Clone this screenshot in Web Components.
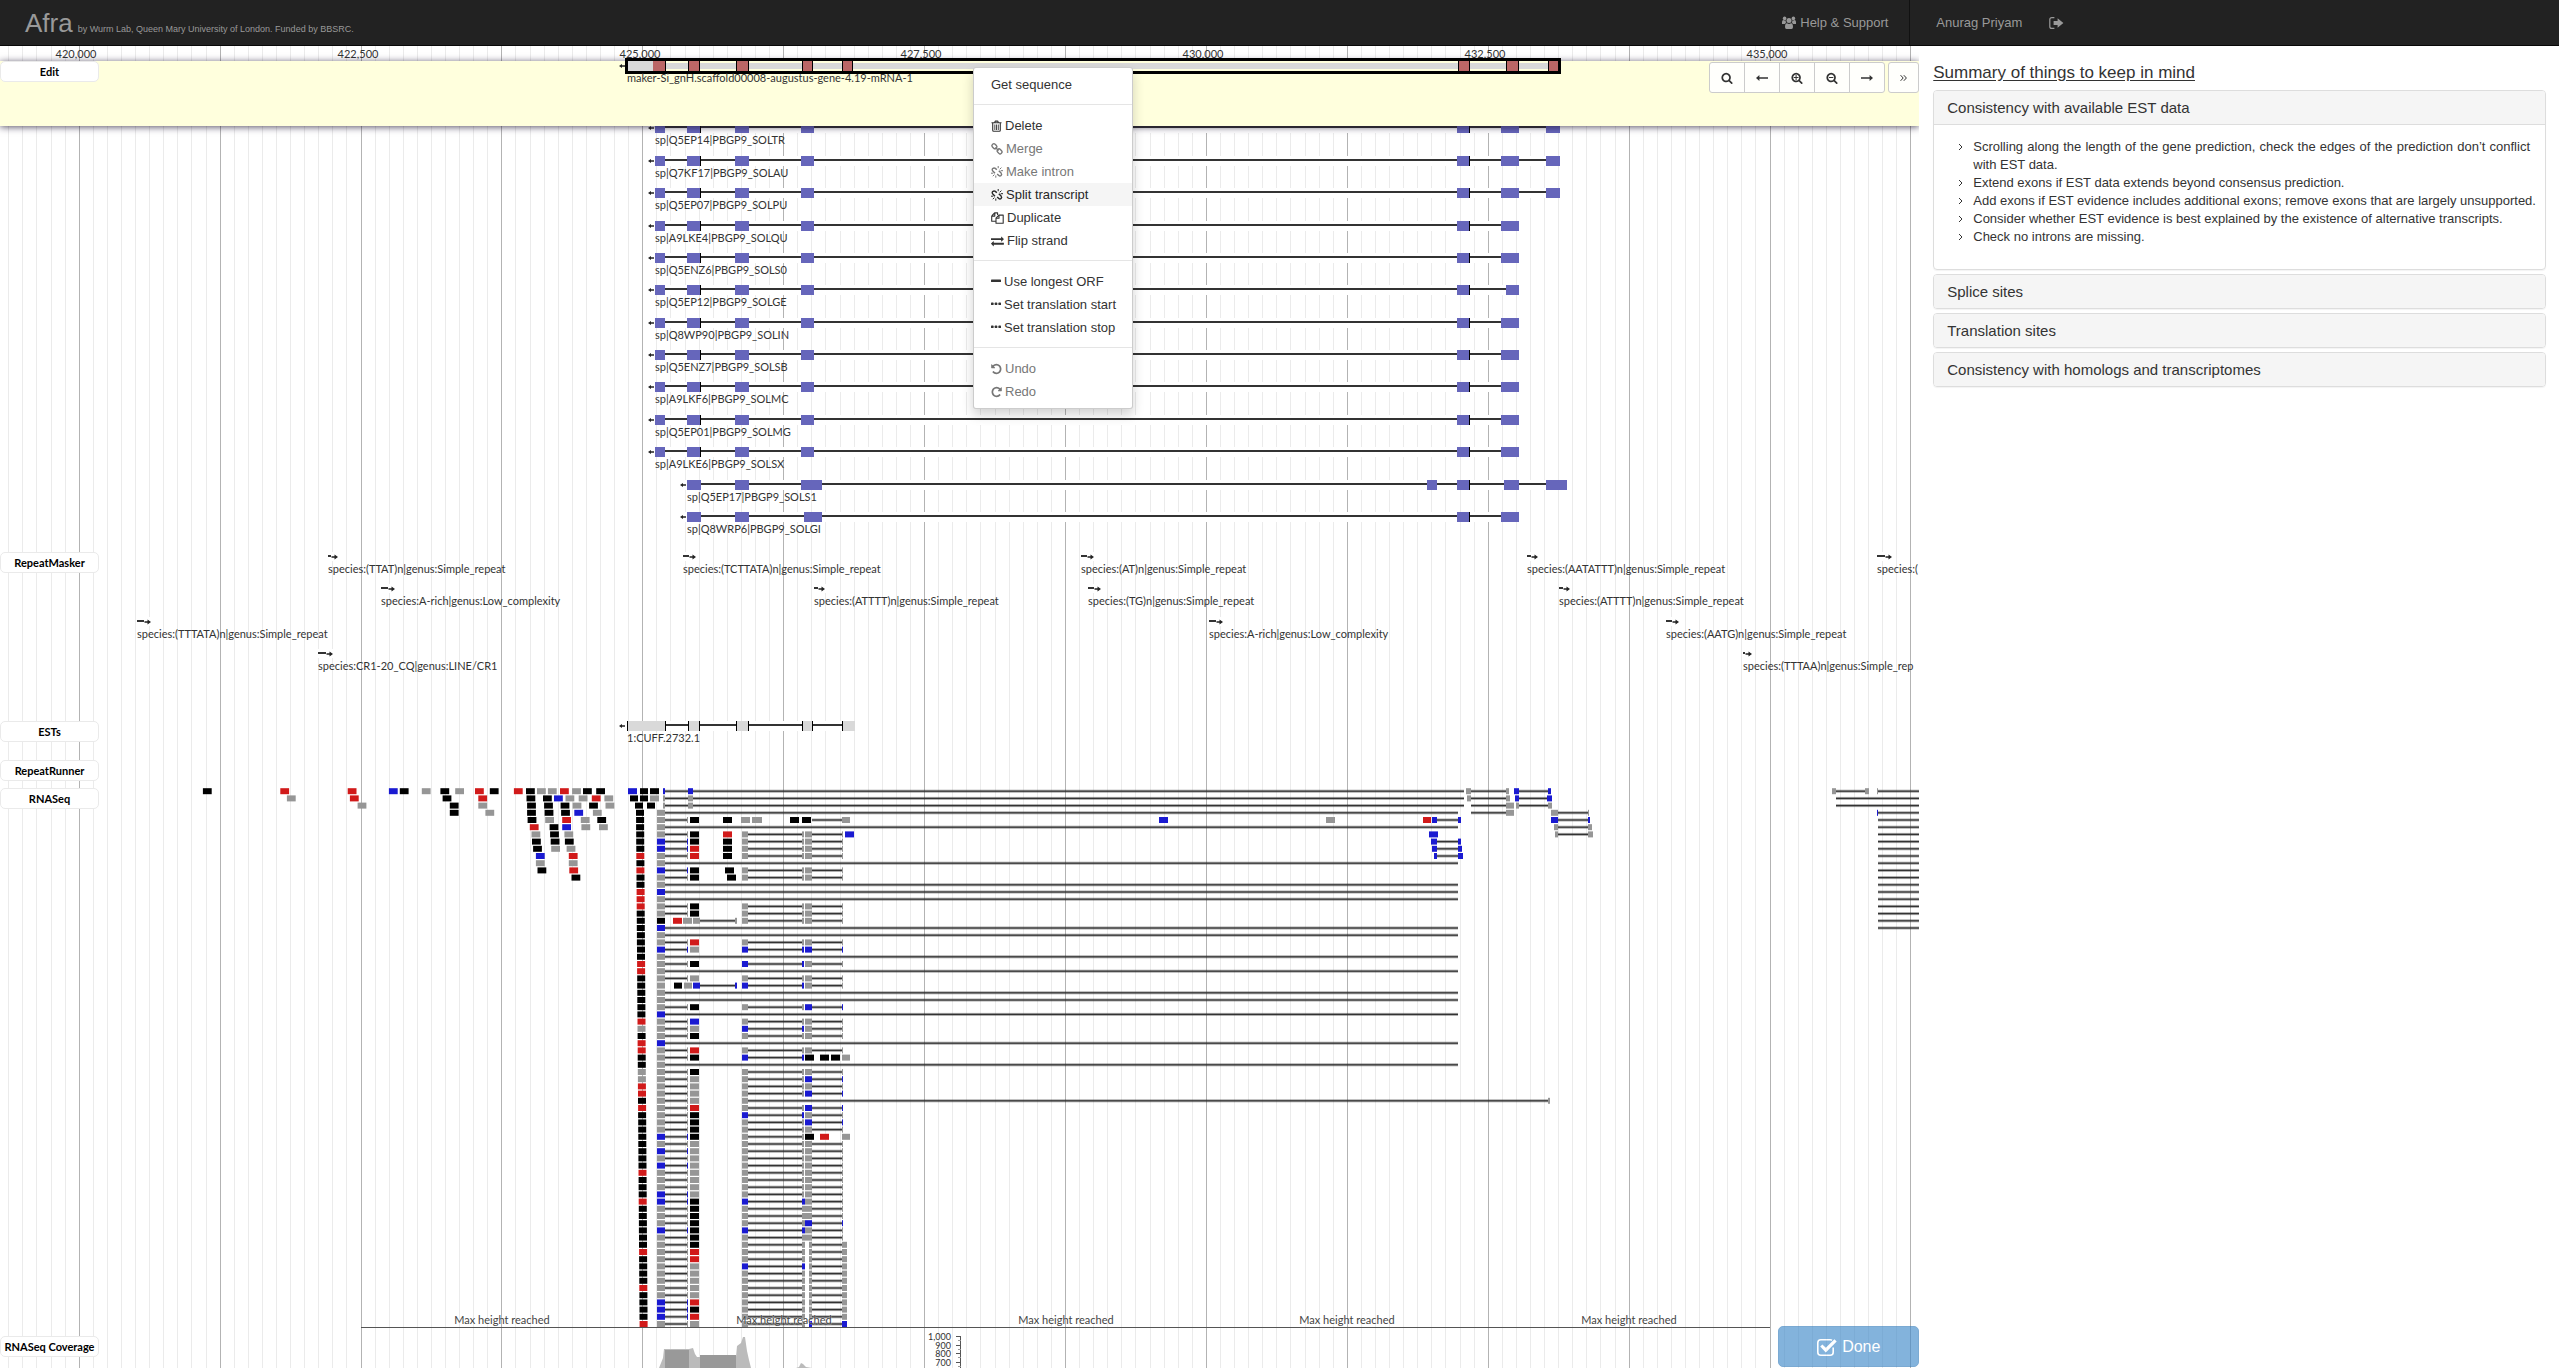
<!DOCTYPE html>
<html lang="en">
<head>
<meta charset="utf-8">
<title>Afra</title>
<style>
html,body{height:100%}
body{margin:0;background:#fff;color:#333;font:13px/18px "Liberation Sans",Arial,sans-serif;overflow:hidden}
</style>
</head>
<body>
<afra-app></afra-app>
<script>
const make = (name, css, html, init) => {
  const tpl = document.createElement('template');
  tpl.innerHTML = `<style>:host,*{box-sizing:border-box}${css}</style>${typeof html === 'string' ? html : ''}`;
  customElements.define(name, class extends HTMLElement {
    constructor() {
      super();
      this.attachShadow({mode: 'open'}).append(tpl.content.cloneNode(true));
    }
    connectedCallback() { if (init && !this.ready) { this.ready = true; init.call(this, this.shadowRoot); } }
  });
};

/* ---------- icons: [width, height, markup] ---------- */
const SEARCH = 'M1216 832q0-185-131.5-316.5t-316.5-131.5-316.5 131.5-131.5 316.5 131.5 316.5 316.5 131.5 316.5-131.5 131.5-316.5zm512 832q0 52-38 90t-90 38q-54 0-90-38l-343-342q-179 124-399 124-143 0-273.5-55.5t-225-150-150-225-55.5-273.5 55.5-273.5 150-225 225-150 273.5-55.5 273.5 55.5 225 150 150 225 55.5 273.5q0 220-124 399l343 343q37 37 37 90z';
const UNDO = 'M1664 896q0 156-61 298t-164 245-245 164-298 61q-172 0-327-72.5t-264-204.5q-7-10-6.5-22.5t8.5-20.5l137-138q10-9 25-9 16 2 23 12 73 95 179 147t225 52q104 0 198.5-40.5t163.5-109.5 109.5-163.5 40.5-198.5-40.5-198.5-109.5-163.5-163.5-109.5-198.5-40.5q-98 0-188 35.5t-160 101.5l137 138q31 30 14 69-17 40-59 40h-448q-26 0-45-19t-19-45v-448q0-42 40-59 39-17 69 14l130 129q107-101 244.5-156.5t284.5-55.5q156 0 298 61t245 164 164 245 61 298z';
const SWAP = 'M1792 1184v192q0 13-9.5 22.5t-22.5 9.5h-1376v192q0 13-9.5 22.5t-22.5 9.5q-12 0-24-10l-319-320q-9-9-9-22 0-14 9-23l320-320q9-9 23-9 13 0 22.5 9.5t9.5 22.5v192h1376q13 0 22.5 9.5t9.5 22.5zm0-544q0 14-9 23l-320 320q-9 9-23 9-13 0-22.5-9.5t-9.5-22.5v-192h-1376q-13 0-22.5-9.5t-9.5-22.5v-192q0-13 9.5-22.5t22.5-9.5h1376v-192q0-14 9-23t23-9q12 0 24 10l319 319q9 9 9 23z';
const line = d => `<path fill="none" stroke="currentColor" stroke-width="1.1" stroke-linejoin="round" d="${d}"/>`;
const LINKS = '<g fill="none" stroke="currentColor" stroke-width="1.4"><rect x="-2.6" y="-1.9" width="5.2" height="3.8" rx="1.7" transform="translate(3.4 3.2) rotate(45)"/><rect x="-2.6" y="-1.9" width="5.2" height="3.8" rx="1.7" transform="translate(8.6 8.4) rotate(45)"/><path d="M4.4 4.400l3.200 3"/></g>';
const BROKEN = '<g fill="none" stroke="currentColor" stroke-width="1.4"><path d="M5.800 3.800L4.400 2.400Q3 1.400 1.800 2.600T1.800 4.900L4 7.200M7.800 4.800l2.300 2.300q1.100 1.200 0 2.300t-2.300 0L6.200 7.900"/><path stroke-width="1" d="M7.200 2.200V0M8.700 3.300L10.400 1.600M9.700 4.700h2.300M4.800 9.500v2.200M3.400 8.600L1.800 10.200M2.200 7.200H0"/></g>';
const ICONS = {
  search: [12, 12, `<path transform="scale(.0067)" d="${SEARCH}"/>`],
  plus: [12, 12, `<path transform="scale(.0067)" d="${SEARCH}"/><path d="M4.6 3.1h1v1.9h1.9v1H5.600v1.900h-1V6H2.700V5h1.900z"/>`],
  minus: [12, 12, `<path transform="scale(.0067)" d="${SEARCH}"/><path d="M2.900 5h4.400v1H2.900z"/>`],
  left: [12, 12, '<path d="M0 6l3.400-3v2.200H12v1.600H3.400V9z"/>'],
  right: [12, 12, '<path d="M12 6L8.600 3v2.200H0v1.600h8.600V9z"/>'],
  more: [7, 12, '<path fill="none" stroke="currentColor" d="M.6 3.200L3.200 6 .6 8.800M3.800 3.200L6.400 6 3.800 8.800"/>'],
  angle: [6, 12, '<path fill="none" stroke="currentColor" d="M1 3l3 3-3 3"/>'],
  trash: [11, 12, line('M.5 2.700h10M3.700 2.500l.5-1.400h2.600l.5 1.400M1.700 2.700v7.600q0 1 .9 1h5.800q.9 0 .9-1V2.700') + '<path d="M3.400 4.500h.9V10h-.9zM5.100 4.500h.9V10h-.9zM6.800 4.500h.9V10h-.9z"/>'],
  link: [12, 12, LINKS],
  unlink: [12, 12, BROKEN],
  copy: [13, 12, line('M.7 4L3.600.9h3V3M.7 4v5.200h4M3.800.9v3.200H.7M5 6.200L7.900 3.100h4.300v8.200H5zM8 3.100v3.200H5')],
  exchange: [13, 12, `<path transform="scale(.0072) translate(0 -70)" d="${SWAP}"/>`],
  dash: [10, 12, '<rect x="0" y="3.600" width="10" height="2.400" rx=".6"/>'],
  dots: [10, 12, '<rect y="3.600" width="2.600" height="2.400" rx=".6"/><rect x="3.700" y="3.600" width="2.600" height="2.400" rx=".6"/><rect x="7.400" y="3.600" width="2.600" height="2.400" rx=".6"/>'],
  undo: [11, 12, `<path transform="scale(.0067) translate(-100 0)" d="${UNDO}"/>`],
  redo: [11, 12, `<path transform="translate(11 0) scale(-.0067 .0067) translate(-100 0)" d="${UNDO}"/>`],
  users: [14, 13, '<circle cx="2.600" cy="2.400" r="1.800"/><circle cx="11.400" cy="2.400" r="1.800"/><path d="M0 8V6q0-2 1.600-2 1 .8 2.200.4Q3.400 6.600 4.400 7 3.400 7.200 2.800 8zM14 8V6q0-2-1.600-2-1 .8-2.200.4.4 2.200-.6 2.600 1 .2 1.600 1z"/><circle cx="7" cy="4.400" r="2.500"/><path d="M3 11q0-3.800 2-3.800 2 1.400 4 0 2 0 2 3.800 0 2-1.500 2h-5Q3 13 3 11z"/>'],
  signout: [15, 12, '<path fill="none" stroke="currentColor" stroke-width="1.200" d="M5.400.6H2.800Q.8.6.8 2.600v6.800q0 2 2 2h2.600"/><path d="M4.600 4h4V1.200L14.400 6 8.600 10.800V8h-4z"/>'],
  check: [20, 18, '<path fill="none" stroke="currentColor" stroke-width="1.600" d="M16.200 9.600v4.600q0 3-3 3H3.800q-3 0-3-3V4.800q0-3 3-3h9.400q1 0 1.800.5"/><path d="M3.200 8.600l2.200-2.200 3.400 3.400L17.400 1.200l2.300 2.300L8.800 14.400z"/>']
};
make('fa-icon', ':host{display:inline-flex;flex:none}svg{display:block;fill:currentColor;overflow:visible}', '', function (root) {
  const [w, h, body] = ICONS[this.getAttribute('name')];
  root.innerHTML += `<svg width="${w}" height="${h}" viewBox="0 0 ${w} ${h}" aria-hidden="true">${body}</svg>`;
});

/* ---------- top bar ---------- */
make('afra-navbar', `
:host{display:flex;align-items:center;height:46px;background:#222;border-bottom:1px solid #080808;color:#999;flex:none}
a{color:inherit;text-decoration:none;display:flex;align-items:center;gap:4px}
.brand{flex:1 1 0;padding-left:25px;display:flex;align-items:baseline;gap:5px}
.brand a{font-size:26px;line-height:30px}
.brand small{font-size:9px}
.mid{width:128px;height:45px;display:flex;border-right:1px solid #111}
.side{flex:none;display:flex;gap:27px;align-items:center;width:calc(25% + 9px);padding-left:26px}`,
`<div class="brand"><a href="#">Afra</a><small>by Wurm Lab, Queen Mary University of London. Funded by BBSRC.</small></div>
<div class="mid"><a href="#help"><fa-icon name="users"></fa-icon>Help &amp; Support</a></div>
<div class="side"><a href="#me">Anurag Priyam</a><a href="#out" aria-label="Sign out"><fa-icon name="signout"></fa-icon></a></div>`);

/* ---------- genome viewer ---------- */
const STEP = 14.09, ORIGIN = 79.2;
const rect = (x, y, w, h, f) => `<rect x="${x}" y="${y}" width="${w}" height="${h}" fill="${f}"/>`;
const label = (x, y, t, extra = '') => `<text x="${x}" y="${y}" ${extra}>${t}</text>`;
const leftArrow = (x, y) => `<path fill="#222" d="M${x} ${y}l3-2v1.200h3v1.600h-3v1.200z"/>`;
const rightArrow = (x, y) => `<path fill="#222" d="M${x + 7} ${y}l-3.500-2.400v1.600h-3v1.600h3v1.600z"/>`;

make('genome-grid', ':host{position:absolute;inset:0;overflow:hidden}svg{display:block;width:100%;height:100%}', '', function (root) {
  let s = '';
  for (let k = -5; k < 400; k++) s += rect(Math.floor(ORIGIN + STEP * k), 0, 1, '100%', k % 10 === 0 ? '#b3b3b3' : '#ebebeb');
  root.innerHTML += `<svg>${s}</svg>`;
});

const DRAW = {
  ruler() {
    return ['420,000', '422,500', '425,000', '427,500', '430,000', '432,500', '435,000']
      .map((t, i) => label(Math.round(76 + i * 281.8), 12, t, 'text-anchor="middle"')).join('');
  },
  edit() {
    let s = rect(625, -3, 936, 16, '#000') + rect(628, 0, 930, 10, '#ffffdd') + rect(628, 2, 930, 6, '#d9d9d9') + rect(628, 0, 26, 10, '#d9d9d9');
    for (const [a, b] of [[654, 665], [689, 699], [737, 748], [803, 812], [843, 852], [1459, 1469], [1507, 1518], [1549, 1558]])
      s += rect(a - 1, 0, b - a + 2, 10, a === 654 ? '#b66' : '#000') + rect(a, 0, b - a, 10, '#b66') + (a === 654 ? rect(665, 0, 1, 10, '#000') : '');
    return s + leftArrow(619, 5) + label(627, 21, 'maker-Si_gnH.scaffold00008-augustus-gene-4.19-mRNA-1');
  },
  homologs() {
    const names = ['Q5EP14|PBGP9_SOLTR', 'Q7KF17|PBGP9_SOLAU', 'Q5EP07|PBGP9_SOLPU', 'A9LKE4|PBGP9_SOLQU', 'Q5ENZ6|PBGP9_SOLS0', 'Q5EP12|PBGP9_SOLGE', 'Q8WP90|PBGP9_SOLIN', 'Q5ENZ7|PBGP9_SOLSB', 'A9LKF6|PBGP9_SOLMC', 'Q5EP01|PBGP9_SOLMG', 'A9LKE6|PBGP9_SOLSX', 'Q5EP17|PBGP9_SOLS1', 'Q8WRP6|PBGP9_SOLGI'];
    return names.map((n, i) => {
      const y = Math.round(-2.600 + 32.380 * i), late = i > 10, x0 = late ? 687 : 655;
      const end = i === 11 ? 1567 : i < 3 ? 1560 : 1519;
      const ex = late ? [] : [[655, 665]];
      ex.push([687, 701], [735, 749], i === 11 ? [801, 822] : i === 12 ? [804, 822] : [801, 814]);
      if (i === 11) ex.push([1427, 1437]);
      ex.push([1457, 1470], [i === 5 ? 1506 : i === 11 ? 1504 : 1501, 1519]);
      if (i < 3) ex.push([1546, 1560]);
      if (i === 11) ex.push([1546, 1567]);
      let s = rect(x0 - 7, y, end - x0 + 7, 10, '#fff') + rect(x0, y + 3, end - x0, 2, '#333');
      for (const [a, b] of ex) s += rect(a, y, b - a, 10, '#6666bb') + (a === 1457 || (a === 687 && !late) ? rect(b - 1, y, 1, 10, '#000') : '');
      return s + leftArrow(x0 - 7, y + 5) + label(x0, y + 21, 'sp|' + n);
    }).join('');
  },
  masker() {
    const sr = m => `species:(${m})n|genus:Simple_repeat`, lc = 'species:A-rich|genus:Low_complexity';
    return [[328, 0, 3, sr('TTAT')], [381, 1, 7, lc], [137, 2, 7, sr('TTTATA')], [318, 3, 8, 'species:CR1-20_CQ|genus:LINE/CR1'],
      [683, 0, 6, sr('TCTTATA')], [814, 1, 4, sr('ATTTT')], [1081, 0, 6, sr('AT')], [1088, 1, 6, sr('TG')], [1209, 2, 7, lc],
      [1527, 0, 4, sr('AATATTT')], [1559, 1, 4, sr('ATTTT')], [1666, 2, 6, sr('AATG')], [1743, 3, 2, 'species:(TTTAA)n|genus:Simple_rep'], [1877, 0, 8, 'species:(']]
      .map(([x, r, w, t]) => { const y = Math.round(4 + 32.300 * r); return rect(x, y - 4, w + 9, 9, '#fff') + rect(x, y - 1, w, 2, '#333') + rightArrow(x + w, y + 1) + label(x, y + 17, t); }).join('');
  },
  ests() {
    let s = rect(620, 0, 234, 10, '#fff') + rect(628, 3, 220, 2, '#333');
    for (const [a, b] of [[627, 666], [688, 700], [736, 749], [802, 813], [842, 855]])
      s += rect(a, 0, b - a, 10, '#000') + rect(a + 1, 0, b - a - (a === 842 ? 1 : 2), 10, '#d9d9d9');
    return s + leftArrow(619, 5) + label(627, 21, '1:CUFF.2732.1');
  },
  runner() { return ''; },
  reads() {
    const C = {k: '#000', r: '#d11a1a', b: '#1a1ad1', g: '#969696'};
    const top = r => 0.2 + r * 7.2;
    let boxes = '', lines = '';
    const box = (r, a, b, c) => boxes += rect(a.toFixed(1), top(r).toFixed(1), (b - a).toFixed(1), 6, C[c]);
    const join = (r, a, b) => {
      const y = top(r);
      lines += rect(a, (y + 1.500).toFixed(1), b - a, 3, 'rgba(0,0,0,.34)') + rect(a, (y + 2.400).toFixed(1), b - a, 1.200, '#333');
    };
    /* reads left of the gene: centres in track units, one string per row */
    ['378k 519r 642r 717b 737k 777g 811k 838g 874r 901k 945r 967k 987g 1007g 1029r 1051g 1071k 1095k', '531g 646r 815k 880r 968k 998k 1018b 1039g 1063g 1087r 1110g', '660g 828k 880g 969k 1000k 1030k 1052g 1082k 1112g', '828k 893g 969k 1001k 1031k 1055b 1089g', '970k 1002g 1033r 1067g 1097k', '974r 1010k 1033b 1068g 1100g', '977g 1011k 1037g', '978k 1012k 1038k', '980k 1013g 1041g', '985b 1045r', '985g 1045g', '988k 1046r', '1050k']
      .forEach((row, r) => row.split(' ').forEach(t => { const x = parseInt(t) * 0.5485; box(r, x - 4.400, x + 4.400, t.slice(-1)); }));
    /* first exon column */
    const A = 'kkkkkkrkrkkrrrkkkkkkkrrkkkkkkrgkrrkkggrrkrkkkkkkkkrkkkrkkkkkkrkkkkrkkkkr';
    [...A].forEach((c, i) => { const x = 636 + i * 3.600 / 71; box(i + 3, x, x + 8, c); });
    const has = (s, r) => s.includes(r);
    const blueB = [7, 8, 11, 14, 19, 22, 31, 35, 48, 50, 52, 56, 57, 61, 71, 72, 73], long = [3, 5, 10, 13, 14, 15, 19, 20, 23, 25, 28, 29, 31, 35, 38];
    const colC = {4: 'k', 6: 'k', 7: 'k', 8: 'r', 9: 'r', 11: 'k', 12: 'k', 16: 'k', 17: 'k', 21: 'r', 24: 'k', 30: 'k', 32: 'b', 34: 'k', 36: 'r', 37: 'k', 39: 'k', 44: 'r', 45: 'k', 46: 'k', 47: 'k', 48: 'k', 57: 'k', 58: 'k', 59: 'k', 60: 'k', 61: 'k', 62: 'k', 63: 'k', 64: 'r', 65: 'r', 71: 'r', 72: 'k', 73: 'r'};
    const blueD = [22, 24, 27, 33, 37, 45, 57, 61, 66], blueE = [22, 30, 40, 42, 44, 46, 60];
    for (let r = 3; r < 75; r++) {
      box(r, 657, 665, r === 18 ? 'k' : has(blueB, r) ? 'b' : 'g');
      if (has(long, r)) { join(r, 665, 1458); continue; }
      if (r !== 18 && r !== 27) {
        join(r, 665, 687); box(r, 687, 688, has(blueB, r) ? 'b' : 'g');
        box(r, 690, 699, colC[r] || 'g');
      }
      if (r === 4) continue;
      const d = has(blueD, r) ? 'b' : 'g', e = has(blueE, r) ? 'b' : 'g';
      box(r, 742, 748, d);
      if (r === 43) { join(r, 748, 1548); box(r, 1548, 1550, 'g'); continue; }
      join(r, 748, 802); box(r, 802, r > 56 ? 805 : 804, d);
      if (r === 37 || r === 48) continue;
      if (r > 62) { box(r, 809, 812, r === 74 ? 'b' : 'g'); join(r, 812, 842); box(r, 842, 847, r === 74 ? 'b' : 'g'); }
      else { box(r, 805, 812, e); join(r, 812, 842); box(r, 842, 843, e); }
    }
    /* top rows that run across the introns */
    for (let r = 0; r < 3; r++) { join(r, 665, 1464); box(r, 663, 665, r ? 'g' : 'b'); box(r, 688, 693, r ? 'g' : 'b'); }
    const more = [
      [0, 628, 637, 'b'], [0, 640, 648, 'k'], [0, 650, 659, 'k'], [1, 630, 638, 'k'], [1, 640, 648, 'k'], [1, 650, 659, 'g'], [2, 635, 643, 'k'], [2, 647, 655, 'k'],
      [4, 723, 732, 'k'], [6, 723, 732, 'r'], [7, 723, 732, 'k'], [8, 723, 732, 'k'], [9, 723, 732, 'k'], [11, 725, 734, 'k'], [12, 727, 736, 'k'],
      [4, 741, 750, 'g'], [4, 752, 762, 'g'], [4, 790, 799, 'k'], [4, 802, 811, 'k'], [4, 842, 850, 'g'], [6, 845, 854, 'b'],
      [18, 673, 682, 'r'], [18, 683, 692, 'g'], [18, 693, 700, 'g'], [18, 735, 737, 'g'], [27, 674, 682, 'k'], [27, 684, 692, 'g'], [27, 693, 700, 'b'], [27, 735, 737, 'b'],
      [37, 805, 814, 'k'], [37, 820, 829, 'k'], [37, 831, 840, 'k'], [37, 842, 850, 'g'], [48, 805, 814, 'k'], [48, 820, 829, 'r'], [48, 842, 850, 'g'],
      [0, 1466, 1471, 'g'], [0, 1506, 1509, 'g'], [0, 1514, 1519, 'b'], [0, 1548, 1551, 'b'], [1, 1467, 1471, 'g'], [1, 1506, 1510, 'g'], [1, 1515, 1519, 'b'], [1, 1547, 1552, 'b'],
      [2, 1506, 1514, 'g'], [2, 1516, 1519, 'g'], [2, 1548, 1552, 'g'], [3, 1506, 1514, 'g'], [3, 1551, 1558, 'g'], [3, 1588, 1589, 'g'],
      [4, 1159, 1168, 'b'], [4, 1326, 1335, 'g'], [4, 1423, 1431, 'r'], [4, 1432, 1437, 'b'], [4, 1458, 1461, 'b'], [4, 1551, 1558, 'b'], [4, 1588, 1590, 'b'],
      [5, 1554, 1558, 'g'], [5, 1588, 1592, 'g'], [6, 1429, 1438, 'b'], [6, 1555, 1558, 'g'], [6, 1588, 1593, 'g'],
      [7, 1431, 1437, 'b'], [7, 1458, 1461, 'b'], [8, 1432, 1437, 'b'], [8, 1458, 1462, 'b'], [9, 1434, 1437, 'b'], [9, 1458, 1463, 'b'],
      [0, 1832, 1836, 'g'], [0, 1865, 1869, 'g'], [0, 1877, 1878, 'g'], [3, 1877, 1878, 'b']];
    [[4, 812, 842], [18, 700, 735], [27, 700, 735], [0, 1471, 1506], [1, 1471, 1506], [2, 1471, 1506], [3, 1471, 1506], [0, 1519, 1548], [1, 1519, 1548], [2, 1519, 1548],
      [3, 1558, 1588], [4, 1558, 1588], [5, 1558, 1588], [6, 1558, 1588], [4, 1437, 1458], [7, 1437, 1458], [8, 1437, 1458], [9, 1437, 1458], [0, 1836, 1865], [0, 1878, 1930], [1, 1836, 1930], [2, 1836, 1930]].forEach(a => join(...a));
    for (let r = 3; r < 20; r++) join(r, 1878, 1930);
    more.forEach(a => box(...a));
    let cap = rect(361, 539, 1409, 1, '#555');
    for (let i = 0; i < 5; i++) cap += label(Math.round(502 + i * 281.8), 536, 'Max height reached', 'text-anchor="middle" class="cap"');
    return lines + boxes + cap;
  },
  coverage() {
    let s = '<path fill="#bbb" d="M659 32l4-10 1-9h25l4-1 2 6 2 3h39l1-11 4-3 2-6h2l2 14 2 9 2 8zM796 32l3-1 2-4 2 1 3 3 6 1z"/>' + rect(665, 14, 24, 18, '#999') + rect(700, 19, 36, 13, '#999');
    s += rect(960, 0, 1, 32, '#555');
    [['1,000', 0], ['900', 9], ['800', 17], ['700', 26]].forEach(([t, y]) => { s += rect(956, y, 5, 1, '#555') + rect(958, y + 4, 3, 1, '#999') + label(951, y + 4, t, 'text-anchor="end" font-size="9"'); });
    return s;
  }
};

make('track-lane', `
:host{display:block;position:relative;flex:none}
svg{display:block;width:100%;height:100%;overflow:visible;font:11px Lato,"Noto Sans",sans-serif}
text{fill:#333}
.cap{fill:#444;stroke:rgba(255,255,255,.4);stroke-width:1px;paint-order:stroke}
.tag{position:absolute;left:0;top:0;width:99px;height:21px;background:#fff;border:1px solid #eaeaea;border-radius:5px;color:#000;font:bold 11px/19px Lato,"Noto Sans",sans-serif;text-align:center;white-space:nowrap}`, '', function (root) {
  const name = this.getAttribute('name');
  root.innerHTML += `<svg>${DRAW[this.getAttribute('kind')]()}</svg>${name ? `<div class="tag">${name}</div>` : ''}`;
});

make('zoom-toolbar', `
:host{display:flex;gap:4px}
div{display:flex}
button{font:inherit;height:31px;padding:0 11px;margin:0 0 0 -1px;border:1px solid #ccc;background:rgba(255,255,255,.9);color:#333;display:flex;align-items:center}
button:first-child{border-radius:3px 0 0 3px;margin-left:0}
div button:last-child{border-radius:0 3px 3px 0}
.more{border-radius:3px}`,
`<div role="group"><button aria-label="Search"><fa-icon name="search"></fa-icon></button><button aria-label="Scroll left"><fa-icon name="left"></fa-icon></button><button aria-label="Zoom in"><fa-icon name="plus"></fa-icon></button><button aria-label="Zoom out"><fa-icon name="minus"></fa-icon></button><button aria-label="Scroll right"><fa-icon name="right"></fa-icon></button></div><button class="more" aria-label="Hide panel"><fa-icon name="more"></fa-icon></button>`);

make('menu-item', `
:host{display:block}
button{font:13px/23px "Liberation Sans",Arial,sans-serif;display:flex;align-items:center;gap:3px;width:100%;height:23px;padding:0 17px;border:0;background:none;color:#333;white-space:nowrap;text-align:left}
:host([off]) button{color:#777}
:host([active]) button{background:#f5f5f5;color:#262626}`, '', function (root) {
  const icon = this.getAttribute('icon');
  root.innerHTML += `<button role="menuitem"${this.hasAttribute('off') ? ' disabled' : ''}>${icon ? `<fa-icon name="${icon}"></fa-icon>` : ''}<slot></slot></button>`;
});
make('context-menu', `
:host{display:block;width:160px;padding:5px 0;background:#fff;border:1px solid rgba(0,0,0,.2);border-radius:3px;box-shadow:0 6px 12px rgba(0,0,0,.18)}
hr{border:0;height:1px;background:#e5e5e5;margin:8px 0 9px}`,
`<menu-item>Get sequence</menu-item><hr>
<menu-item icon="trash">Delete</menu-item><menu-item icon="link" off>Merge</menu-item><menu-item icon="unlink" off>Make intron</menu-item><menu-item icon="unlink" active>Split transcript</menu-item><menu-item icon="copy">Duplicate</menu-item><menu-item icon="exchange">Flip strand</menu-item><hr>
<menu-item icon="dash">Use longest ORF</menu-item><menu-item icon="dots">Set translation start</menu-item><menu-item icon="dots">Set translation stop</menu-item><hr>
<menu-item icon="undo" off>Undo</menu-item><menu-item icon="redo" off>Redo</menu-item>`);

make('genome-browser', `
:host{display:flex;flex-direction:column;position:relative;overflow:hidden;background:#fff}
.ruler{height:15px}.edit{height:65px;background:#ffffdd;z-index:1;box-shadow:0 1px 7px rgba(30,20,50,.75)}
.homologs{height:426px}.masker{height:169px}.ests{height:39px}.runner{height:28px}.reads{height:548px}.coverage{height:32px}
zoom-toolbar{position:absolute;z-index:2;top:16px;right:0}
context-menu{position:absolute;z-index:3;left:973px;top:21px}
.done{position:absolute;z-index:2;right:0;bottom:1px;width:141px;height:41px;border:1px solid #357ebd;border-radius:5px;background:#428bca;opacity:.65;color:#fff;font:16px "Liberation Sans",Arial,sans-serif;display:flex;align-items:center;justify-content:center;gap:5px}`,
`<genome-grid></genome-grid>
<track-lane class="ruler" kind="ruler"></track-lane>
<track-lane class="edit" kind="edit" name="Edit"></track-lane>
<track-lane class="homologs" kind="homologs"></track-lane>
<track-lane class="masker" kind="masker" name="RepeatMasker"></track-lane>
<track-lane class="ests" kind="ests" name="ESTs"></track-lane>
<track-lane class="runner" kind="runner" name="RepeatRunner"></track-lane>
<track-lane class="reads" kind="reads" name="RNASeq"></track-lane>
<track-lane class="coverage" kind="coverage" name="RNASeq Coverage"></track-lane>
<zoom-toolbar></zoom-toolbar><context-menu></context-menu>
<button class="done"><fa-icon name="check"></fa-icon>Done</button>`);

/* ---------- guide ---------- */
make('guide-section', `
:host{display:block;flex:none;border:1px solid #ddd;border-radius:4px;box-shadow:0 1px 1px rgba(0,0,0,.05);overflow:hidden}
h3{margin:0;height:33px;padding:0 13px;background:#f5f5f5;font:15px/33px "Liberation Sans",Arial,sans-serif}
:host([open]) h3{border-bottom:1px solid #ddd;height:34px}`,
'<h3><slot name="title"></slot></h3><slot></slot>');
make('guide-panel', `
:host{display:flex;flex-direction:column;gap:4px;padding:14px 13px 0 14px}
h2{margin:0 0 1px;font:17px/25px "Liberation Sans",Arial,sans-serif;text-decoration:underline;text-underline-offset:2px}
ul{list-style:none;margin:0;padding:13px 15px 23px 39px;line-height:18px}
li{position:relative;text-align:justify}
li fa-icon{position:absolute;left:-15px;top:3px}
.one{white-space:nowrap}`,
`<h2>Summary of things to keep in mind</h2>
<guide-section open><span slot="title">Consistency with available EST data</span><ul>
<li><fa-icon name="angle"></fa-icon>Scrolling along the length of the gene prediction, check the edges of the prediction don’t conflict with EST data.</li>
<li><fa-icon name="angle"></fa-icon>Extend exons if EST data extends beyond consensus prediction.</li>
<li class="one"><fa-icon name="angle"></fa-icon>Add exons if EST evidence includes additional exons; remove exons that are largely unsupported.</li>
<li><fa-icon name="angle"></fa-icon>Consider whether EST evidence is best explained by the existence of alternative transcripts.</li>
<li><fa-icon name="angle"></fa-icon>Check no introns are missing.</li></ul></guide-section>
<guide-section><span slot="title">Splice sites</span></guide-section>
<guide-section><span slot="title">Translation sites</span></guide-section>
<guide-section><span slot="title">Consistency with homologs and transcriptomes</span></guide-section>`);

make('afra-app', `
:host{display:flex;flex-direction:column;height:100vh}
main{display:flex;flex:1;min-height:0}
genome-browser{flex:3 1 0;min-width:0}
guide-panel{flex:none;width:25%}`,
'<afra-navbar></afra-navbar><main><genome-browser></genome-browser><guide-panel></guide-panel></main>');
</script>
</body>
</html>
